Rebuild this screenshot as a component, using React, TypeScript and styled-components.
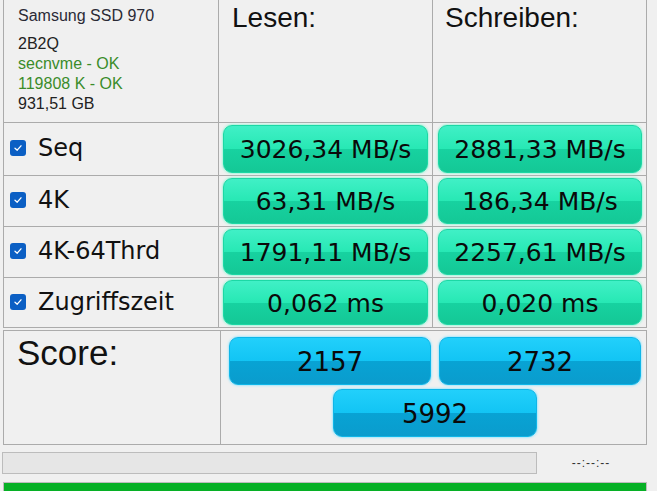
import React from "react";
import styled, { createGlobalStyle } from "styled-components";

const Global = createGlobalStyle`
  html, body {
    margin: 0;
    padding: 0;
    background: #f0f0f0;
    font-family: "Liberation Sans", Arial, sans-serif;
    overflow: hidden;
  }
`;

const Page = styled.div`
  width: 657px;
  height: 491px;
  display: flex;
  flex-direction: column;
  background: #f0f0f0;
`;

const Table = styled.div`
  margin-left: 3px;
  width: 644px;
  box-sizing: border-box;
  display: grid;
  grid-template-columns: 214px 213px 213px;
  grid-template-rows: 122px 52px 50px 50px 49px;
  gap: 1px;
  padding: 0 1px 1px 1px;
  background: #ababab;
`;

const Cell = styled.div`
  background: #f0f0f0;
  box-sizing: border-box;
  min-width: 0;
`;

const InfoCell = styled(Cell)`
  padding: 6px 0 0 14px;
  font-size: 16px;
  line-height: 20px;
  color: #222;
`;

const InfoTitle = styled.div`
  margin-bottom: 8px;
  color: #2a2a36;
`;

const InfoLine = styled.div<{ $ok?: boolean }>`
  color: ${(p) => (p.$ok ? "#3a8c2a" : "#222")};
`;

const HeadCell = styled(Cell)<{ $pl: number }>`
  padding: 2px 0 0 ${(p) => p.$pl}px;
  font-size: 28px;
  line-height: 32px;
  color: #111;
`;

const LabelCell = styled(Cell)`
  display: flex;
  align-items: center;
  padding-left: 6px;
  gap: 12px;
  font-family: "DejaVu Sans", "Liberation Sans", sans-serif;
  font-size: 24px;
  color: #111;
  padding-bottom: 2px;
`;

const Check = styled.span`
  width: 16px;
  height: 16px;
  border-radius: 3px;
  background: #0b5fc4;
  display: inline-flex;
  align-items: center;
  justify-content: center;
  flex: none;
`;

const ValueCell = styled(Cell)<{ $pl: number }>`
  padding: 2px 4px 2px ${(p) => p.$pl}px;
  display: flex;
`;

const Pill = styled.div<{ $blue?: boolean }>`
  flex: 1;
  border-radius: 9px;
  display: flex;
  align-items: center;
  justify-content: center;
  font-family: "DejaVu Sans", "Liberation Sans", sans-serif;
  font-size: 25px;
  color: #0a0a0a;
  padding-top: 1px;
  box-sizing: border-box;
  background: ${(p) =>
    p.$blue
      ? "linear-gradient(to bottom, #22d0fb 0%, #12c4f4 50%, #08a3d4 51%, #0a9ccd 100%)"
      : "linear-gradient(to bottom, #40f0c6 0%, #27e8b4 50%, #17d2a0 51%, #14c896 100%)"};
  border: 1px solid ${(p) => (p.$blue ? "#0fb6e8" : "#1cd8a5")};
  box-shadow: 0 0 2px 1px ${(p) => (p.$blue ? "#a8e8fb" : "#a8f4dc")};
`;

const ScoreBox = styled.div`
  margin: 2px 0 0 3px;
  width: 644px;
  height: 115px;
  box-sizing: border-box;
  display: grid;
  grid-template-columns: 216px 1fr;
  gap: 1px;
  padding: 1px;
  background: #ababab;
`;

const ScoreLabel = styled(Cell)`
  padding: 2px 0 0 13px;
  font-size: 35px;
  line-height: 40px;
  color: #111;
`;

const ScoreCell = styled(Cell)`
  padding: 6px 5px 0 8px;
  display: grid;
  grid-template-columns: 1fr 1fr;
  grid-template-rows: 48px 48px;
  column-gap: 8px;
  row-gap: 4px;
`;

const ScorePill = styled(Pill)<{ $span?: boolean }>`
  ${(p) => (p.$span ? "grid-column: 1 / span 2; justify-self: center; width: 204px;" : "")}
  font-size: 26px;
`;

const Footer = styled.div`
  margin-top: 7px;
  display: flex;
  align-items: center;
  height: 22px;
`;

const Progress = styled.div`
  margin-left: 2px;
  width: 535px;
  height: 22px;
  box-sizing: border-box;
  background: #e6e6e6;
  border: 1px solid #bcbcbc;
`;

const Time = styled.div`
  flex: 1;
  text-align: center;
  font-size: 12px;
  color: #333;
  padding-right: 12px;
  letter-spacing: 1px;
`;

const GreenBar = styled.div`
  margin: 8px 0 0 3px;
  width: 644px;
  flex: 1;
  box-sizing: border-box;
  background: #06b025;
  border-top: 1px solid #bcbcbc;
  border-left: 1px solid #bcbcbc;
  border-right: 1px solid #bcbcbc;
`;

const CheckMark = () => (
  <svg width="10" height="10" viewBox="0 0 10 10">
    <path d="M2 5.2 L4.2 7.2 L8 2.8" fill="none" stroke="#fff" strokeWidth="1.3" strokeLinecap="round" strokeLinejoin="round" />
  </svg>
);

const rows = [
  { label: "Seq", read: "3026,34 MB/s", write: "2881,33 MB/s" },
  { label: "4K", read: "63,31 MB/s", write: "186,34 MB/s" },
  { label: "4K-64Thrd", read: "1791,11 MB/s", write: "2257,61 MB/s" },
  { label: "Zugriffszeit", read: "0,062 ms", write: "0,020 ms" },
];

export default function App() {
  return (
    <Page>
      <Global />
      <Table>
        <InfoCell>
          <InfoTitle>Samsung SSD 970</InfoTitle>
          <InfoLine>2B2Q</InfoLine>
          <InfoLine $ok>secnvme - OK</InfoLine>
          <InfoLine $ok>119808 K - OK</InfoLine>
          <InfoLine>931,51 GB</InfoLine>
        </InfoCell>
        <HeadCell $pl={13}>Lesen:</HeadCell>
        <HeadCell $pl={12}>Schreiben:</HeadCell>
        {rows.map((r) => (
          <React.Fragment key={r.label}>
            <LabelCell>
              <Check>
                <CheckMark />
              </Check>
              {r.label}
            </LabelCell>
            <ValueCell $pl={4}>
              <Pill>{r.read}</Pill>
            </ValueCell>
            <ValueCell $pl={5}>
              <Pill>{r.write}</Pill>
            </ValueCell>
          </React.Fragment>
        ))}
      </Table>
      <ScoreBox>
        <ScoreLabel>Score:</ScoreLabel>
        <ScoreCell>
          <ScorePill $blue>2157</ScorePill>
          <ScorePill $blue>2732</ScorePill>
          <ScorePill $blue $span>5992</ScorePill>
        </ScoreCell>
      </ScoreBox>
      <Footer>
        <Progress />
        <Time>--:--:--</Time>
      </Footer>
      <GreenBar />
    </Page>
  );
}
